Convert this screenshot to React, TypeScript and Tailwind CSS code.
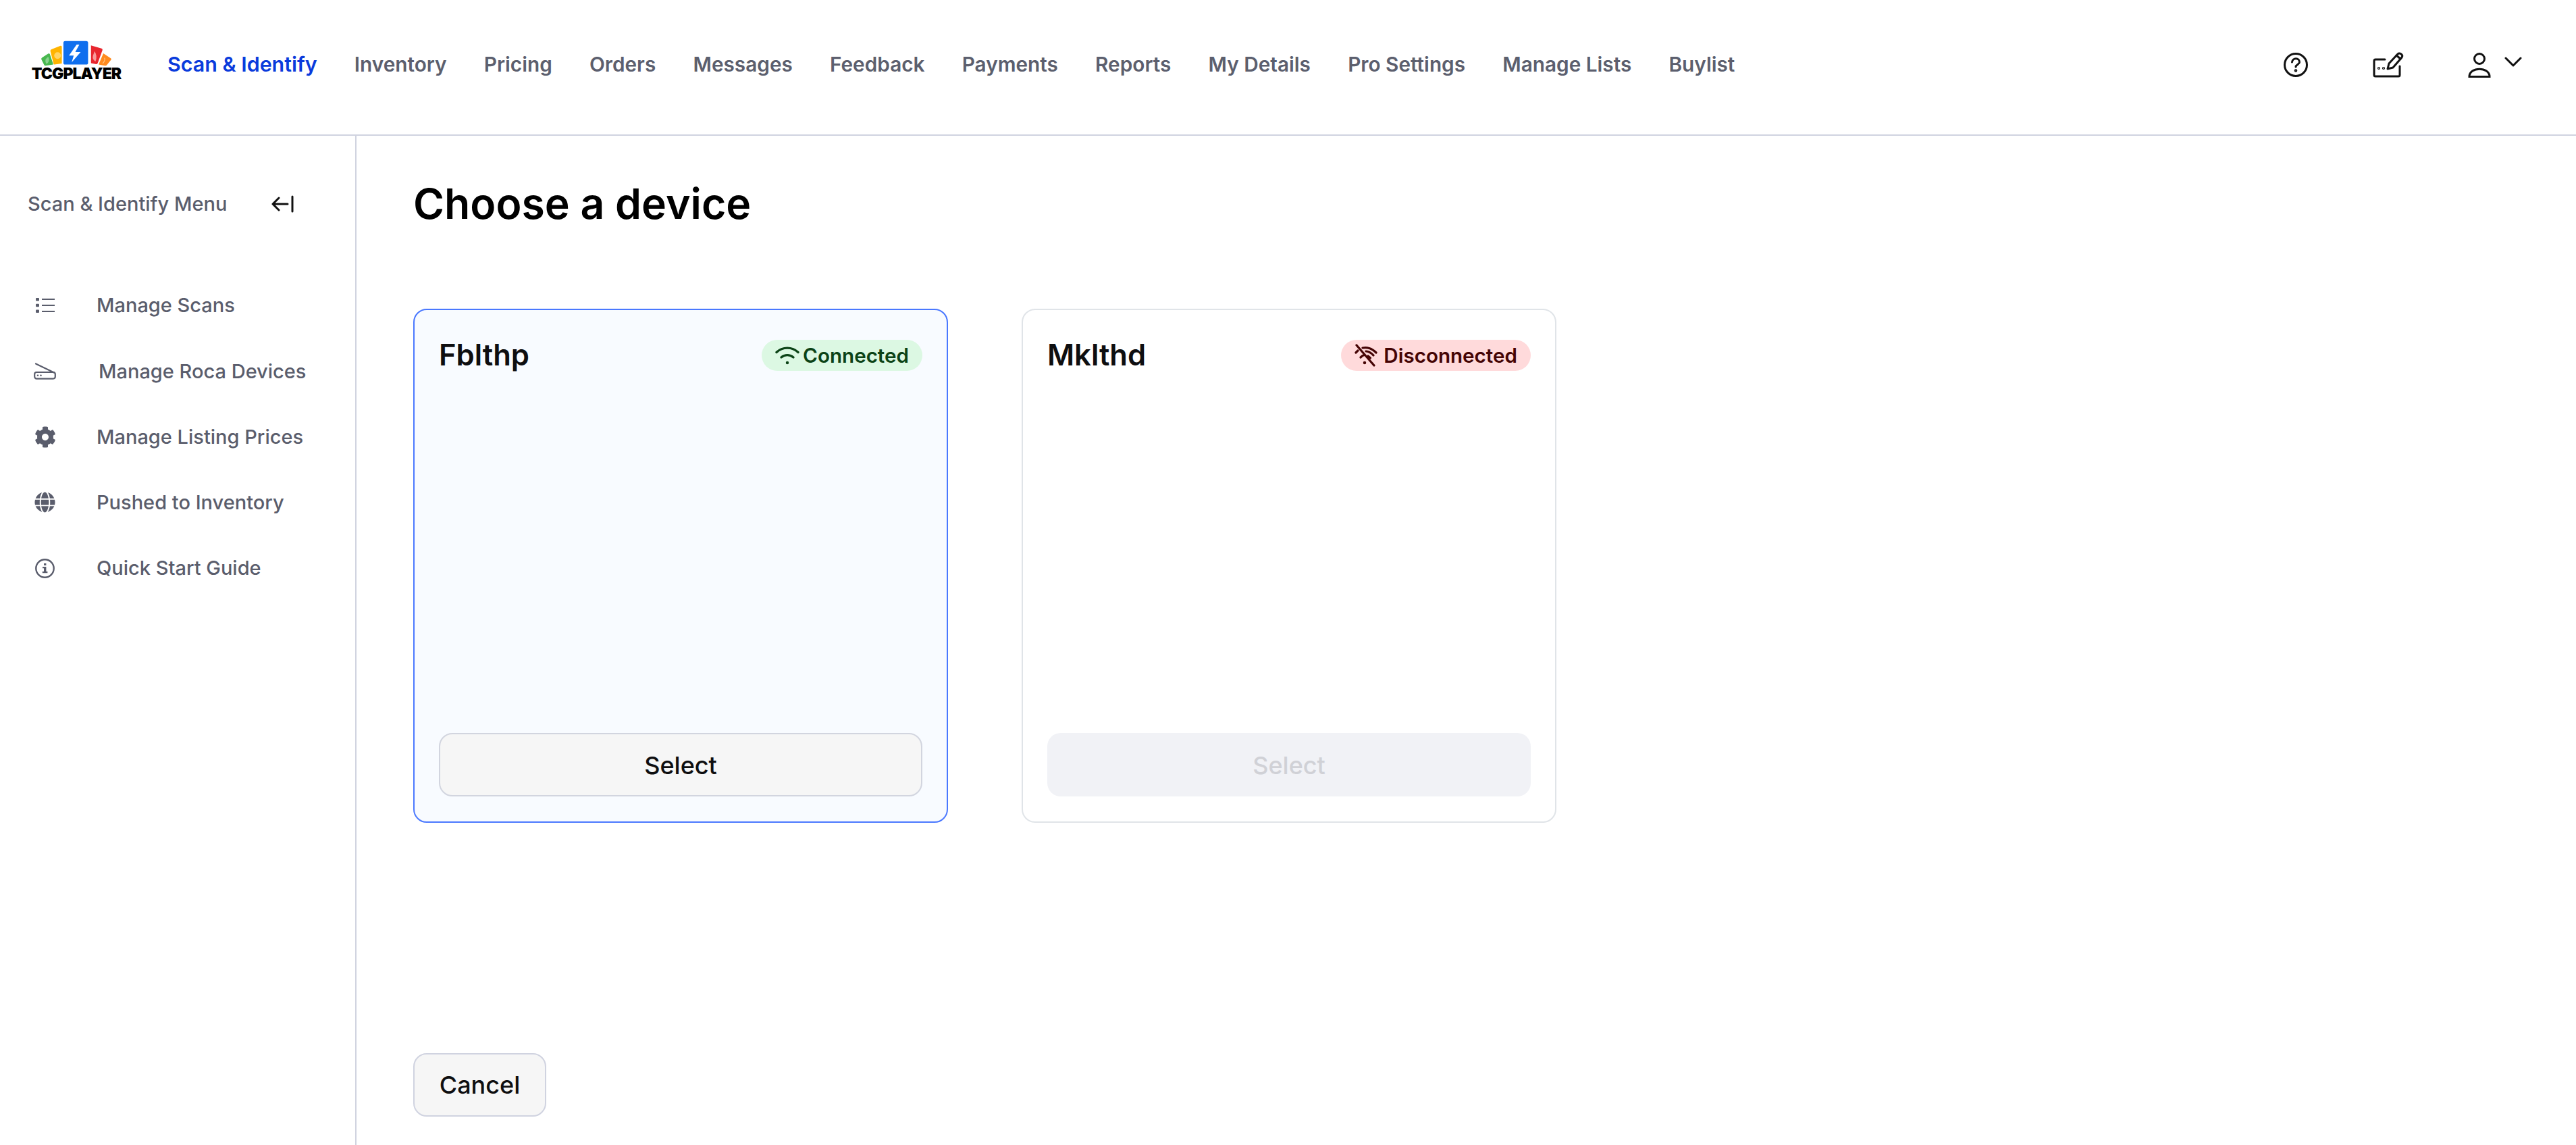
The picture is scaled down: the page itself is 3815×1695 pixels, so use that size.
import React from "react";
import { FaCog, FaGlobe } from "react-icons/fa";

const nav = ["Inventory","Pricing","Orders","Messages","Feedback","Payments","Reports","My Details","Pro Settings","Manage Lists","Buylist"];

function Logo() {
  return (
    <div className="flex flex-col items-center w-[134px] shrink-0 mb-[22px] -ml-[2px] mr-[2px]">
      <svg width="108" height="40" viewBox="90 55 325 120" className="block">
        <path d="M97 142q-2-5 3-8l28-18q5-2 7 3l15 46-35 5q-4 0-6-4z" fill="#48b84f" />
        <path d="M117 140q-5 10 2 22q12-6 12-20q-1-8-4-12z" fill="#8ad38f" />
        <path d="M137 105q-1-6 5-8l40-16q5-1 6 4v75l-33 5q-3 0-4-4z" fill="#ffb400" />
        <circle cx="169" cy="125" r="15" fill="#ffd566" />
        <rect x="195" y="60" width="110" height="105" rx="8" fill="#0f6fee" />
        <path d="M254 76l-34 49h21l-9 30 40-46h-24l18-33z" fill="#fff" />
        <path d="M318 80l47 13q6 2 4 8l-21 58q-2 5-7 4l-23-4z" fill="#e8262e" />
        <path d="M334 105q14 22 4 46q-16-8-11-26z" fill="#f89a9a" />
        <path d="M373 115l33 22q4 3 2 6l-20 25q-3 3-7 2l-29-5z" fill="#ff8a1e" />
        <path d="M378 135q6 10-8 25" stroke="#ffc27e" strokeWidth="4" fill="none" />
      </svg>
      <span className="text-[23px] leading-[20px] font-black text-black tracking-[-1px] font-['Inter',sans-serif] whitespace-nowrap">TCGPLAYER</span>
    </div>
  );
}

function ScannerIcon() {
  return (
    <svg width="33" height="25" viewBox="0 0 33 25" fill="none" stroke="#5a5d6c" strokeWidth="2.2" strokeLinecap="round">
      <path d="M3 1.5l27 13" />
      <rect x="1.2" y="14" width="30.6" height="9.6" rx="3" />
      <circle cx="6" cy="18.8" r="0.7" fill="#5a5d6c" strokeWidth="1.2" />
      <circle cx="10.5" cy="18.8" r="0.7" fill="#5a5d6c" strokeWidth="1.2" />
    </svg>
  );
}

function ListIcon() {
  return (
    <svg width="28" height="22" viewBox="0 0 28 22" fill="#5a5d6c">
      <rect x="0" y="0" width="5" height="4.5" rx="1" />
      <rect x="0" y="8.7" width="5" height="4.5" rx="1" />
      <rect x="0" y="17.5" width="5" height="4.5" rx="1" />
      <rect x="9" y="1" width="19" height="2" />
      <rect x="9" y="10" width="19" height="2" />
      <rect x="9" y="19" width="19" height="2" />
    </svg>
  );
}

function InfoIcon() {
  return (
    <svg width="29" height="29" viewBox="0 0 29 29" fill="none">
      <circle cx="14.5" cy="14.5" r="13.2" stroke="#5a5d6c" strokeWidth="2.4" />
      <rect x="13" y="7" width="3.4" height="3" fill="#5a5d6c" />
      <path d="M11 12h5.4v7h2v2.2h-7.6V19h2.2v-4.8h-2z" fill="#5a5d6c" />
    </svg>
  );
}

function Wifi() {
  return (
    <svg width="36" height="28" viewBox="0 0 36 28" fill="none" stroke="#0b4316" strokeWidth="3.4" strokeLinecap="round">
      <path d="M2 9.5C11 1 25 1 34 9.5" />
      <path d="M9 17c5.5-4.5 12.5-4.5 18 0" />
      <circle cx="18" cy="25" r="1.5" fill="#0b4316" strokeWidth="1.5" />
    </svg>
  );
}

function WifiOff() {
  return (
    <svg width="34" height="34" viewBox="0 0 34 34" fill="none" stroke="#450404" strokeWidth="3.2" strokeLinecap="round">
      <path d="M3 2l26 30" />
      <path d="M12 6c7-1.5 14 1 20 7" />
      <path d="M2 13l3-3" />
      <path d="M9 20c2-2 3.5-3 5.5-3.5" />
      <path d="M17 11c5 .5 8 2.5 11 6" />
      <path d="M20 18l3.5 3" />
      <circle cx="15" cy="28" r="1.5" fill="#450404" strokeWidth="1.5" />
    </svg>
  );
}

function SideItem({ icon, label, textClass }: { icon: React.ReactNode; label: string; textClass: string }) {
  return (
    <div className="flex items-center h-[40px]">
      <span className="w-[33px] flex items-center justify-center shrink-0 ml-[50px]">{icon}</span>
      <span className={`text-[#5a5d6c] text-[29px] font-medium whitespace-nowrap ${textClass}`}>{label}</span>
    </div>
  );
}

function Card({ name, connected }: { name: string; connected: boolean }) {
  return (
    <div className={`w-[792px] h-[761px] rounded-[20px] border-[2px] px-[36px] py-[37px] flex flex-col justify-between ${connected ? "border-[#4a78ff] bg-[#f8fbff]" : "border-[#e0e4e8] bg-white"}`}>
      <div className="flex items-center justify-between h-[46px] mt-[7px]">
        <span className="text-[43.5px] font-semibold text-[#0e0e10] leading-none">{name}</span>
        {connected ? (
          <span className="flex items-center h-[46px] rounded-full bg-[#dcf8e3] px-[20px] gap-[5px] text-[29.6px] font-semibold text-[#0b4316] whitespace-nowrap pt-[1px]">
            <Wifi />Connected
          </span>
        ) : (
          <span className="flex items-center h-[46px] rounded-full bg-[#ffdadb] px-[20px] gap-[9px] text-[29.6px] font-semibold text-[#450404] whitespace-nowrap pt-[1px]">
            <WifiOff />Disconnected
          </span>
        )}
      </div>
      {connected ? (
        <button className="h-[94px] w-full rounded-[20px] border-[2px] border-[#d2d5df] bg-[#f6f6f6] text-[36px] font-medium text-[#0e0e10] pt-[2px]">Select</button>
      ) : (
        <button className="h-[94px] w-full rounded-[20px] bg-[#f1f2f6] text-[36px] font-medium text-[#d0d1d6] pt-[2px]">Select</button>
      )}
    </div>
  );
}

export default function App() {
  return (
    <div className="w-full h-screen flex flex-col bg-white font-['Inter',sans-serif] overflow-hidden">
      <header className="h-[201px] shrink-0 border-b-[2px] border-[#d0d3e0] flex items-center pl-[48px] pr-[80px]">
        <Logo />
        <nav className="flex items-center gap-[55.2px] ml-[66px] text-[29.75px] font-semibold text-[#5c5f6e] whitespace-nowrap -mt-[8px]">
          <span className="text-[#0a3bdc] text-[30.4px]">Scan &amp; Identify</span>
          {nav.map((n) => <span key={n}>{n}</span>)}
        </nav>
        <div className="ml-auto flex items-center -mt-[8px]">
          <svg width="38" height="38" viewBox="0 0 38 38" fill="none" stroke="#111" strokeWidth="3" strokeLinecap="round">
            <circle cx="19" cy="19" r="16.5" />
            <path d="M13.5 15c.5-7 11-7 11 0 0 3.5-5.5 3.5-5.5 7" />
            <circle cx="19" cy="27.5" r="0.8" fill="#111" />
          </svg>
          <svg width="46" height="38" viewBox="0 0 46 38" fill="none" stroke="#111" strokeWidth="3" strokeLinecap="round" strokeLinejoin="round" className="ml-[95px]">
            <path d="M18 11H4q-2 0-2 2v21q0 2 2 2h34q2 0 2-2V21" />
            <path d="M22 25l2-8L37 3q2-2 5 0t1 5L30 23z" />
            <path d="M35 5l6 5" />
            <circle cx="9" cy="24" r="0.6" fill="#111" />
            <circle cx="16" cy="24" r="0.6" fill="#111" />
          </svg>
          <svg width="34" height="38" viewBox="0 0 34 38" fill="none" stroke="#111" strokeWidth="3" strokeLinecap="round" className="ml-[95px]">
            <circle cx="17" cy="10" r="7.5" />
            <path d="M2 36.5c0-15 30-15 30 0z" />
          </svg>
          <svg width="26" height="16" viewBox="0 0 26 16" fill="none" stroke="#111" strokeWidth="3" strokeLinecap="round" strokeLinejoin="round" className="ml-[20px] -mt-[8px]">
            <path d="M2 2l11 11L24 2" />
          </svg>
        </div>
      </header>
      <div className="flex flex-1 min-h-0">
        <aside className="w-[528px] shrink-0 border-r-[2px] border-[#d0d3e0]">
          <div className="flex items-center h-[40px] mt-[81px] pl-[41px]">
            <span className="text-[29px] font-medium text-[#5a5d6c] whitespace-nowrap">Scan &amp; Identify Menu</span>
            <svg width="34" height="26" viewBox="0 0 34 26" fill="none" stroke="#111" strokeWidth="3" strokeLinecap="round" strokeLinejoin="round" className="ml-[66px]">
              <path d="M2 13h22M11 4l-9 9 9 9" />
              <path d="M31 2v22" />
            </svg>
          </div>
          <div className="flex flex-col gap-[57.3px] mt-[110px]">
            <SideItem icon={<ListIcon />} label="Manage Scans" textClass="ml-[60px]" />
            <SideItem icon={<ScannerIcon />} label="Manage Roca Devices" textClass="ml-[63px]" />
            <SideItem icon={<FaCog className="text-[#5a5d6c] text-[32px]" />} label="Manage Listing Prices" textClass="ml-[60px]" />
            <SideItem icon={<FaGlobe className="text-[#5a5d6c] text-[31px]" />} label="Pushed to Inventory" textClass="ml-[60px]" />
            <SideItem icon={<InfoIcon />} label="Quick Start Guide" textClass="ml-[60px]" />
          </div>
        </aside>
        <main className="flex-1 flex flex-col justify-between pl-[84px] pb-[42px]">
          <div>
            <h1 className="text-[62.5px] font-semibold text-black leading-none mt-[69px]">Choose a device</h1>
            <div className="flex gap-[109px] mt-[124px]">
              <Card name="Fblthp" connected />
              <Card name="Mklthd" connected={false} />
            </div>
          </div>
          <button className="w-[197px] h-[94px] rounded-[20px] border-[2px] border-[#d0d3e0] bg-[#f6f6f6] text-[36px] font-medium text-[#0e0e10]">Cancel</button>
        </main>
      </div>
    </div>
  );
}
